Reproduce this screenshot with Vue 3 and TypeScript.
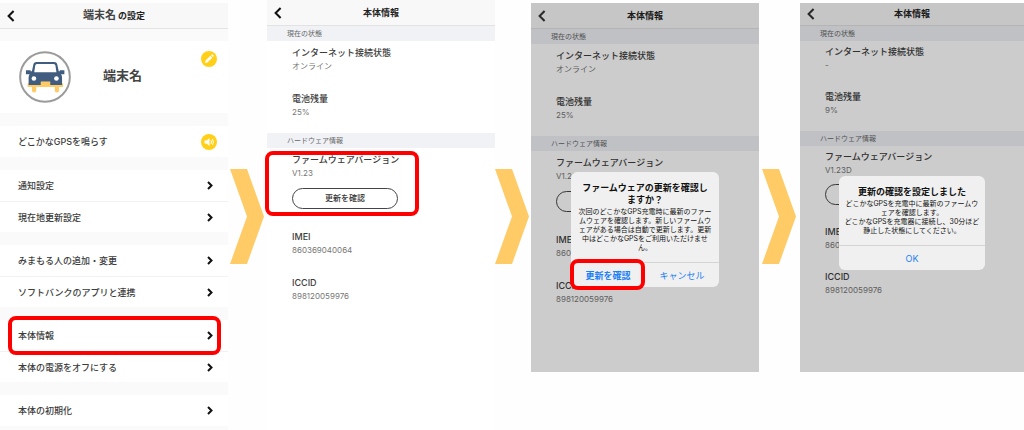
<script setup lang="ts">
interface MenuRow {
  label: string
  icon?: 'sound'
  highlighted?: boolean
}

interface Action {
  label: string
  primary?: boolean
  highlighted?: boolean
}

interface Dialog {
  title: string[]
  body: string[]
  actions: Action[]
}

interface DeviceScreen {
  id: string
  variant: string
  connection: string
  battery: string
  version: string
  highlighted?: boolean
  dialog?: Dialog
}

const menuGroups: MenuRow[][] = [
  [{ label: 'どこかなGPSを鳴らす', icon: 'sound' }],
  [{ label: '通知設定' }, { label: '現在地更新設定' }],
  [{ label: 'みまもる人の追加・変更' }, { label: 'ソフトバンクのアプリと連携' }],
  [{ label: '本体情報', highlighted: true }, { label: '本体の電源をオフにする' }],
  [{ label: '本体の初期化' }],
]

const screens: DeviceScreen[] = [
  {
    id: 'info',
    variant: 'full',
    connection: 'オンライン',
    battery: '25%',
    version: 'V1.23',
    highlighted: true,
  },
  {
    id: 'confirm',
    variant: 'dimmed',
    connection: 'オンライン',
    battery: '25%',
    version: 'V1.23',
    dialog: {
      title: ['ファームウェアの更新を確認し', 'ますか？'],
      body: [
        '次回のどこかなGPS充電時に最新のファー',
        'ムウェアを確認します。新しいファームウ',
        'ェアがある場合は自動で更新します。更新',
        '中はどこかなGPSをご利用いただけませ',
        'ん。',
      ],
      actions: [
        { label: '更新を確認', primary: true, highlighted: true },
        { label: 'キャンセル' },
      ],
    },
  },
  {
    id: 'done',
    variant: 'dimmed compact',
    connection: '-',
    battery: '9%',
    version: 'V1.23D',
    dialog: {
      title: ['更新の確認を設定しました'],
      body: [
        'どこかなGPSを充電中に最新のファームウ',
        'ェアを確認します。',
        'どこかなGPSを充電器に接続し、30分ほど',
        '静止した状態にしてください。',
      ],
      actions: [{ label: 'OK' }],
    },
  },
]
</script>

<template>
  <main class="flow">
    <section class="screen settings">
      <header class="bar">
        <button class="back" type="button" aria-label="戻る">
          <svg viewBox="0 0 8 12"><path d="M6.6 1 1.6 6l5 5" /></svg>
        </button>
        <h1><span class="device">端末名</span> の設定</h1>
      </header>

      <div class="profile">
        <svg class="avatar" viewBox="27 33 157 157" aria-hidden="true">
          <circle cx="105.500" cy="111.500" r="75" fill="#fff" stroke="#9b9b9b" stroke-width="6" />
          <path
            fill="#ffcb66"
            d="M53 130h107v12h-12v10a6.500 6.500 0 0 1-13 0v-10H79v10a6.500 6.500 0 0 1-13 0v-10H53z"
          />
          <path
            fill="#405d80"
            fill-rule="evenodd"
            d="M80 66h53q9 0 10 9l4 19h3v-3h14v12h-10q3 4 3 10v23h-36v-9H93v9H56v-23q0-6 3-10H48V91h14v3h4l4-19q1-9 10-9zM81 72q-4 0-5 5l-3 20h67l-3-20q-1-5-5-5z"
          />
          <path fill="#ffcb66" d="M93 125h28v12H93z" />
          <circle cx="72" cy="116" r="7" fill="#fff" />
          <circle cx="140" cy="116" r="7" fill="#fff" />
        </svg>
        <h2>端末名</h2>
        <button class="round edit" type="button" aria-label="編集">
          <svg viewBox="0 0 16 16">
            <path d="M4 12l.6-2.400L9.400 4.800l1.900 1.900-4.900 4.800zM10 4.200l.8-.8q.4-.3.800 0l1.100 1.100q.3.400 0 .8l-.8.800z" />
          </svg>
        </button>
      </div>

      <nav>
        <ul v-for="(group, g) in menuGroups" :key="g" class="group">
          <li v-for="row in group" :key="row.label">
            <button class="row" type="button">
              <span>{{ row.label }}</span>
              <span v-if="row.icon" class="round">
                <svg viewBox="0 0 16 16">
                  <path d="M3.500 6.500h2L8.500 4v8l-3-2.500h-2z" />
                  <path class="wave" d="M10 6.200q1 1.800 0 3.600M11.500 5q1.800 3 0 6" />
                </svg>
              </span>
              <svg v-else class="next" viewBox="0 0 6 9"><path d="M1 1l3.500 3.500L1 8" /></svg>
            </button>
            <span v-if="row.highlighted" class="mark"></span>
          </li>
        </ul>
      </nav>
    </section>

    <template v-for="s in screens" :key="s.id">
      <svg class="arrow" viewBox="0 0 34 95" aria-hidden="true">
        <path d="M0 0h17l17 47.500L17 95H0l17-47.500z" />
      </svg>

      <section class="screen info" :class="s.variant">
        <header class="bar">
          <button class="back" type="button" aria-label="戻る">
            <svg viewBox="0 0 8 12"><path d="M6.600 1 1.600 6l5 5" /></svg>
          </button>
          <h1>本体情報</h1>
        </header>
        <h2 class="section">現在の状態</h2>
        <dl>
          <div class="item">
            <dt>インターネット接続状態</dt>
            <dd>{{ s.connection }}</dd>
          </div>
          <div class="item">
            <dt>電池残量</dt>
            <dd>{{ s.battery }}</dd>
          </div>
        </dl>
        <h2 class="section">ハードウェア情報</h2>
        <dl>
          <div class="item firmware">
            <dt>ファームウェアバージョン</dt>
            <dd>{{ s.version }}</dd>
            <dd class="update">
              <button v-if="s.dialog" type="button" aria-label="更新を確認" disabled></button>
              <button v-else type="button">更新を確認</button>
            </dd>
            <dd v-if="s.highlighted" class="mark"></dd>
          </div>
          <div class="item">
            <dt>IMEI</dt>
            <dd>860369040064</dd>
          </div>
          <div class="item">
            <dt>ICCID</dt>
            <dd>898120059976</dd>
          </div>
        </dl>

        <div v-if="s.dialog" class="overlay">
          <div class="dialog" role="dialog" :aria-labelledby="s.id + '-title'">
            <h3 :id="s.id + '-title'">
              <span v-for="line in s.dialog.title" :key="line">{{ line }}</span>
            </h3>
            <p>
              <span v-for="line in s.dialog.body" :key="line">{{ line }}</span>
            </p>
            <div class="actions">
              <div v-for="a in s.dialog.actions" :key="a.label" class="action">
                <button type="button" :class="{ primary: a.primary }">{{ a.label }}</button>
                <span v-if="a.highlighted" class="mark"></span>
              </div>
            </div>
          </div>
        </div>
      </section>
    </template>
  </main>
</template>

<style>
body {
  margin: 0;
  background: #fefefe;
}
</style>

<style scoped>
.flow {
  display: grid;
  grid-template-columns: 228fr 39px 228fr 36px 228fr 41px 224fr;
  min-height: 100vh;
  font-family: Inter, "Noto Sans CJK JP", sans-serif;
  font-size: 9px;
  color: #3c3c3c;
}

h1,
h2,
h3,
p,
ul,
dl,
dd {
  margin: 0;
  padding: 0;
}

ul {
  list-style: none;
}

button {
  border: 0;
  padding: 0;
  background: none;
  color: inherit;
  font: inherit;
  cursor: pointer;
}

svg {
  display: block;
}

.screen {
  position: relative;
  min-width: 0;
  background: #fff;
}

.bar {
  display: grid;
  grid-template-columns: 22px 1fr 22px;
  align-items: center;
  box-sizing: border-box;
  height: 26px;
  border-bottom: 1px solid #e2e2e2;
  background: #f8f8f8;
}

.bar h1 {
  color: #222;
  font-size: 9px;
  line-height: 16px;
  font-weight: 700;
  text-align: center;
}

.back {
  justify-self: center;
}

.back svg {
  width: 8px;
  height: 12px;
  fill: none;
  stroke: #111;
  stroke-width: 2;
}

.mark {
  position: absolute;
  z-index: 1;
  box-sizing: border-box;
  border: 4px solid #fe0000;
  border-radius: 8px;
  pointer-events: none;
}

.arrow {
  justify-self: center;
  width: 34px;
  height: 95px;
  margin: 169px 2px 0 0;
  fill: #ffcb66;
}

/* Settings menu */
.settings {
  margin-top: 3px;
  background: #fafafa;
}

.device {
  color: #444;
  font-size: 11px;
}

.profile {
  display: grid;
  grid-template-columns: 52px 1fr 16px;
  column-gap: 32px;
  align-items: center;
  box-sizing: border-box;
  height: 72px;
  margin-top: 12px;
  padding: 0 11px 0 19px;
  background: #fff;
}

.avatar {
  width: 52px;
  height: 52px;
}

.profile h2 {
  color: #444;
  font-size: 13px;
  line-height: 20px;
  font-weight: 700;
  padding-bottom: 4px;
}

.round {
  display: block;
  width: 16px;
  height: 16px;
  border-radius: 50%;
  background: #ffd017;
}

.round svg {
  width: 16px;
  height: 16px;
  fill: #fff;
}

.round .wave {
  fill: none;
  stroke: #fff;
}

.edit {
  align-self: start;
  margin-top: 10px;
}

.group {
  margin-top: 13px;
  background: #fff;
}

.group li {
  position: relative;
}

.group li + li .row {
  border-top: 1px solid #f2f2f2;
}

.row {
  display: flex;
  align-items: center;
  justify-content: space-between;
  box-sizing: border-box;
  width: 100%;
  height: 31px;
  padding: 0 11px 0 18px;
  font-weight: 500;
  text-align: left;
}

.next {
  width: 6px;
  height: 9px;
  margin-right: 4px;
  fill: none;
  stroke: #111;
  stroke-width: 2;
}

.group .mark {
  inset: -4px 7px -4px 8px;
}

/* Device information */
.section {
  padding-left: 20px;
  background: #f0f2f6;
  color: #666;
  font-size: 7px;
  line-height: 15px;
  font-weight: 400;
}

.item {
  position: relative;
  padding: 5px 0 14px 25px;
}

.item dt {
  line-height: 14px;
  font-weight: 500;
}

.item dd {
  color: #777;
  font-size: 8px;
  line-height: 13px;
}

.firmware {
  padding-bottom: 16px;
}

.item .update {
  display: flex;
  margin-top: 8px;
}

.update button {
  box-sizing: border-box;
  width: 106px;
  height: 21px;
  border: 1px solid #444;
  border-radius: 11px;
  color: #333;
  font-size: 8px;
  font-weight: 500;
}

.firmware .mark {
  inset: 3px 76px 9px -2px;
}

.dimmed {
  align-self: start;
  min-height: 369px;
  margin-top: 3px;
}

.dimmed .back svg {
  stroke: #333;
}

.compact .bar {
  height: 23px;
}

.compact .item {
  padding-top: 4px;
}

.compact .update {
  margin-top: 7px;
}

.overlay {
  position: absolute;
  inset: 0;
  display: flex;
  align-items: flex-start;
  justify-content: center;
  padding-top: 169px;
  background: rgba(0, 0, 0, 0.2);
}

.compact .overlay {
  padding-top: 173px;
}

.dialog {
  width: 65%;
  border-radius: 6px;
  background: #f0f0f0;
  color: #111;
  text-align: center;
  white-space: nowrap;
}

.dialog h3 {
  padding-top: 10px;
  font-size: 9px;
  line-height: 12px;
  font-weight: 700;
}

.dialog h3 span,
.dialog p span {
  display: flex;
  justify-content: center;
}

.dialog p {
  padding: 1px 0 10px;
  font-size: 7px;
  line-height: 9px;
}

.actions {
  display: flex;
  border-top: 1px solid #d4d4d4;
}

.action {
  position: relative;
  flex: 1;
}

.action button {
  width: 100%;
  height: 24px;
  color: #1c80f6;
}

.action .primary {
  font-weight: 700;
}

.action .mark {
  inset: -4px 0 -3px -1px;
}
</style>
